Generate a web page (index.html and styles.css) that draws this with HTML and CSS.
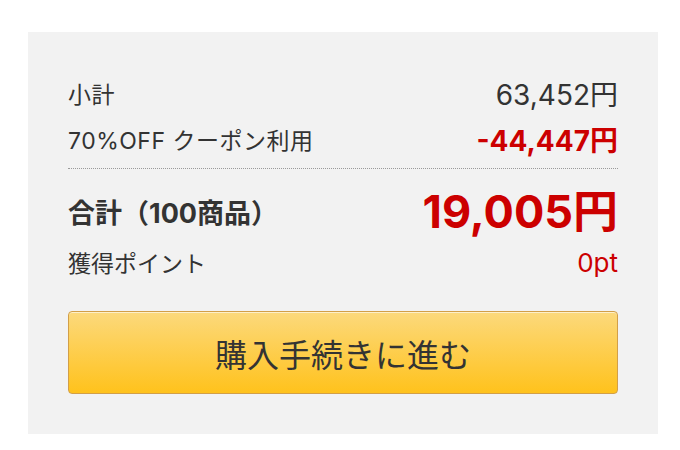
FILE: index.html
```html
<!DOCTYPE html>
<html lang="ja">
<head>
  <meta charset="UTF-8">
  <meta name="viewport" content="width=device-width, initial-scale=1.0">
  <title>ご注文金額</title>
  <link rel="stylesheet" href="styles.css">
</head>
<body>

  <!-- Order summary -->
  <section class="summary">
    <div class="row row-sub">
      <span class="label">小計</span>
      <span class="price">63,452円</span>
    </div>
    <div class="row row-sub">
      <span class="label">70%OFF クーポン利用</span>
      <span class="price discount">-44,447円</span>
    </div>

    <div class="total">
      <div class="row row-total">
        <span class="total-label">合計（100商品）</span>
        <span class="total-price">19,005円</span>
      </div>
      <div class="row row-points">
        <span class="label">獲得ポイント</span>
        <span class="points">0pt</span>
      </div>
    </div>

    <button class="checkout" type="button">購入手続きに進む</button>
  </section>

</body>
</html>
```

FILE: styles.css
```css
body {
  margin: 0;
  font-family: "Inter", "Noto Sans CJK JP", sans-serif;
  color: #333;
  background: #fff;
}

.summary {
  width: 550px;
  margin: 32px 0 0 28px;
  padding: 38px 40px 40px;
  background: #f2f2f2;
}

.row {
  display: flex;
  justify-content: space-between;
  align-items: center;
}

.row-sub {
  height: 46px;
}

.label {
  font-size: 23px;
  letter-spacing: 0.5px;
}

.price {
  font-size: 28px;
}

.discount {
  color: #cc0000;
  font-weight: bold;
}

.total {
  margin-top: 6px;
  padding-top: 19px;
  border-top: 1px dotted #9a9a9a;  /* dotted rule between subtotal and total */
}

.row-total {
  height: 46px;
}

.total-label {
  font-size: 27px;
  font-weight: bold;
}

.total-price {
  font-size: 45px;
  font-weight: bold;
  color: #cc0000;
  line-height: 1;
}

.row-points {
  height: 30px;
  margin-top: 13px;
}

.row-points .label {
  letter-spacing: 0;
}

.points {
  font-size: 26px;
  color: #cc0000;
}

.checkout {
  display: block;
  width: 100%;
  height: 83px;
  margin-top: 34px;
  padding: 0;
  font-family: "Noto Sans CJK JP", sans-serif;
  font-size: 32px;
  color: #333;
  background: linear-gradient(to bottom, #fcd97c, #ffc21c);
  border: 1px solid #d29f48;
  border-radius: 4px;
  box-shadow: inset 0 1px 0 rgba(255, 255, 255, 0.6);
  cursor: pointer;
}
```
